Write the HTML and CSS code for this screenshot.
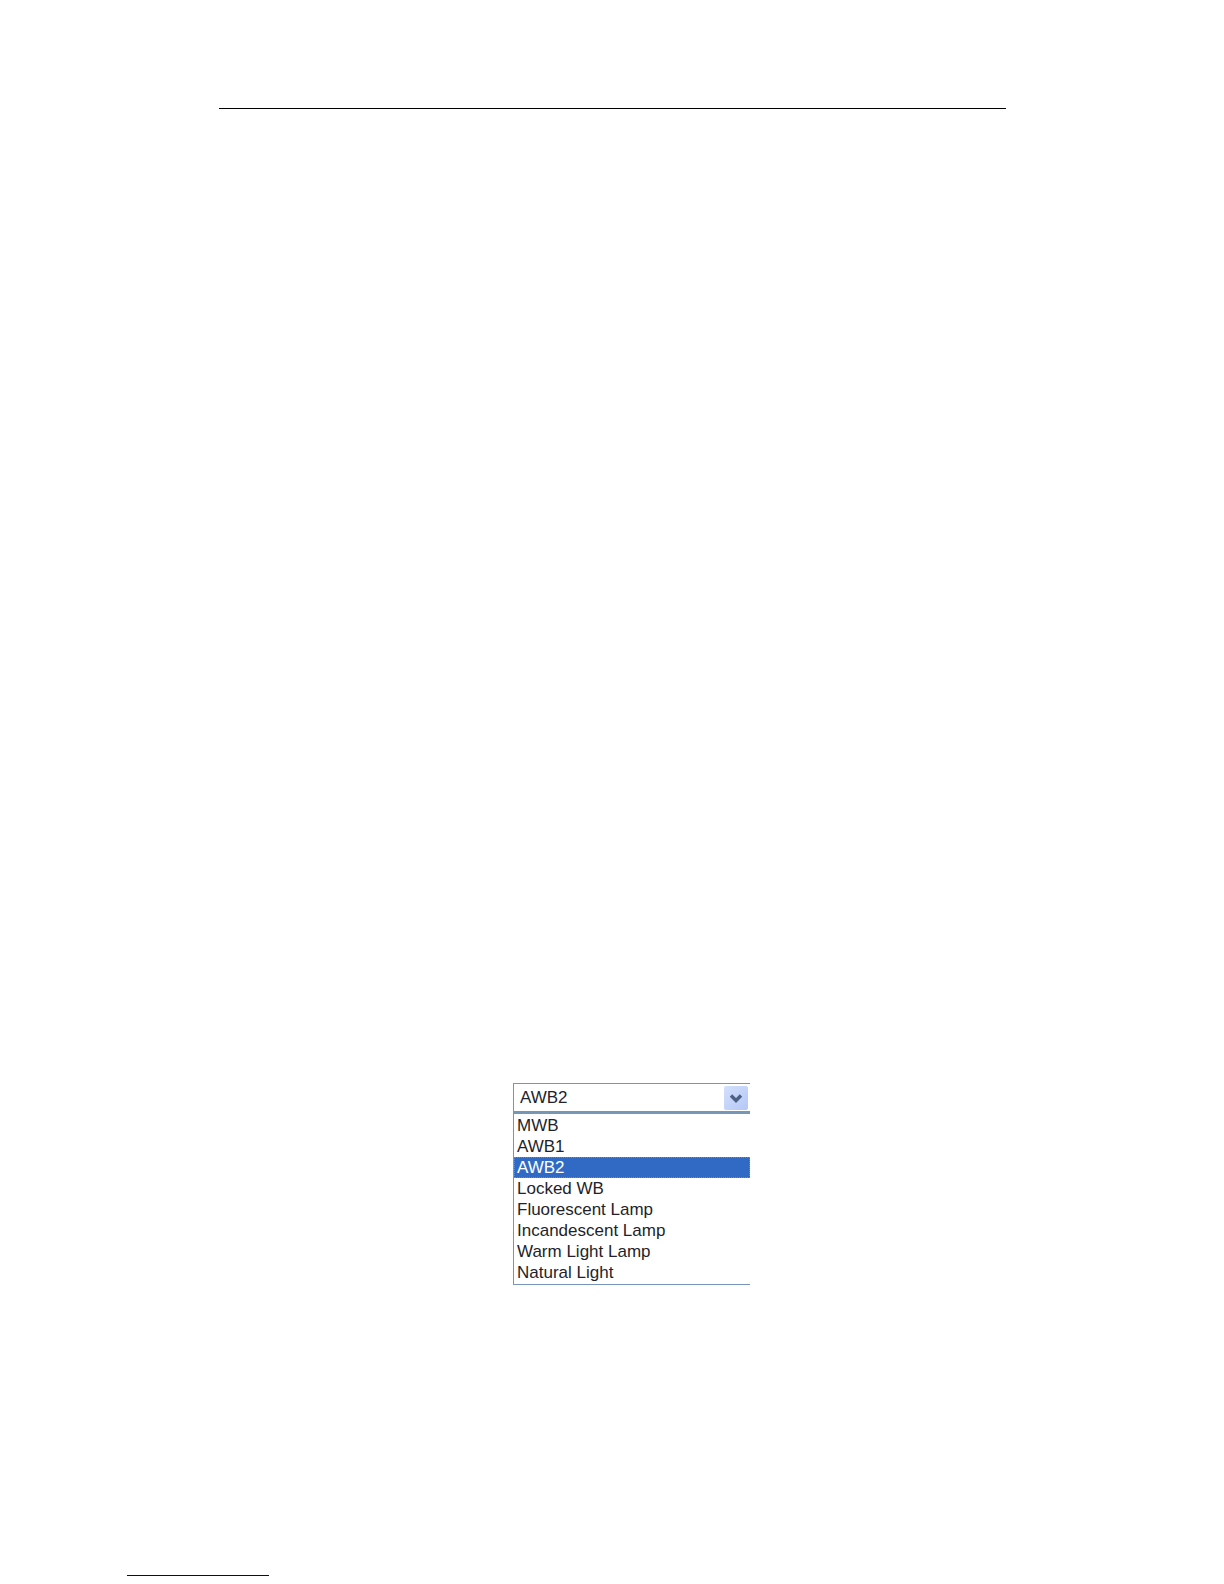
FILE: index.html
```html
<!DOCTYPE html>
<html lang="en">

<head>
    <meta charset="UTF-8">
    <meta name="viewport" content="width=device-width, initial-scale=1.0">
    <title>White Balance</title>
    <link rel="stylesheet" href="styles.css">
</head>

<body>

    <header class="page-header">
        <hr class="header-line">
    </header>

    <main class="content">
        <div class="dropdown">
            <div class="field">
                <select id="wb" class="wb-select" aria-label="White balance">
                    <option>MWB</option>
                    <option>AWB1</option>
                    <option selected>AWB2</option>
                    <option>Locked WB</option>
                    <option>Fluorescent Lamp</option>
                    <option>Incandescent Lamp</option>
                    <option>Warm Light Lamp</option>
                    <option>Natural Light</option>
                </select>
                <span class="arrow">
                    <svg width="24" height="24" viewBox="0 0 24 24" aria-hidden="true">
                        <path d="M7 9.5 L12 14.5 L17 9.5" fill="none" stroke="#4d6185" stroke-width="3.4" />
                    </svg>
                </span>
            </div>
            <ul class="options" role="listbox" aria-label="White balance">
                <li role="option">MWB</li>
                <li role="option">AWB1</li>
                <li role="option" class="selected" aria-selected="true">AWB2</li>
                <li role="option">Locked WB</li>
                <li role="option">Fluorescent Lamp</li>
                <li role="option">Incandescent Lamp</li>
                <li role="option">Warm Light Lamp</li>
                <li role="option">Natural Light</li>
            </ul>
        </div>
    </main>

    <footer class="page-footer">
        <hr class="footer-line">
    </footer>

</body>

</html>
```

FILE: styles.css
```css
* {
    box-sizing: border-box;
}

body {
    margin: 0;
    min-height: 100vh;
    display: flex;
    flex-direction: column;
    background-color: #fff;
    font-family: "Liberation Sans", Arial, sans-serif;
    font-size: 17px;
    color: #231f2b;
}

hr {
    margin: 0;
    border: none;
    height: 1px;
}

.page-header {
    padding: 108px 218px 0 219px;
}

.header-line {
    background-color: #000;
}

.content {
    flex: 1;
    padding: 974px 218px 0 513px;
}

.dropdown {
    max-width: 237px;
}

.field {
    position: relative;
    height: 29px;
    border: 1px solid #7596b4;
    border-right: none;
}

.wb-select {
    display: block;
    appearance: none;
    width: 100%;
    height: 100%;
    margin: 0;
    padding: 0 28px 0 6px;
    border: none;
    border-radius: 0;
    outline: none;
    background-color: #fff;
    color: #231f2b;
    font-family: inherit;
    font-size: 17px;
}

/* blue button over the right end of the select */
.arrow {
    position: absolute;
    top: 2px;
    right: 2px;
    width: 24px;
    height: 24px;
    border-radius: 2px;
    background: linear-gradient(135deg, #d3e0fc, #b4c8f6);
    pointer-events: none;
}

.arrow svg {
    display: block;
}

.options {
    margin: 0;
    padding: 1px 0;
    list-style: none;
    border: 1px solid #7596b4;
    border-top-width: 2px;
    border-right: none;
}

.options li {
    height: 21px;
    padding: 0 3px;
    line-height: 21px;
    white-space: nowrap;
}

.options .selected {
    background-color: #316ac5;
    color: #fff;
    outline: 1px dotted #8d8a63;
    outline-offset: -1px;
}

.page-footer {
    padding: 0 127px 8px;
}

.footer-line {
    width: 142px;
    background-color: #000080;
}
```
